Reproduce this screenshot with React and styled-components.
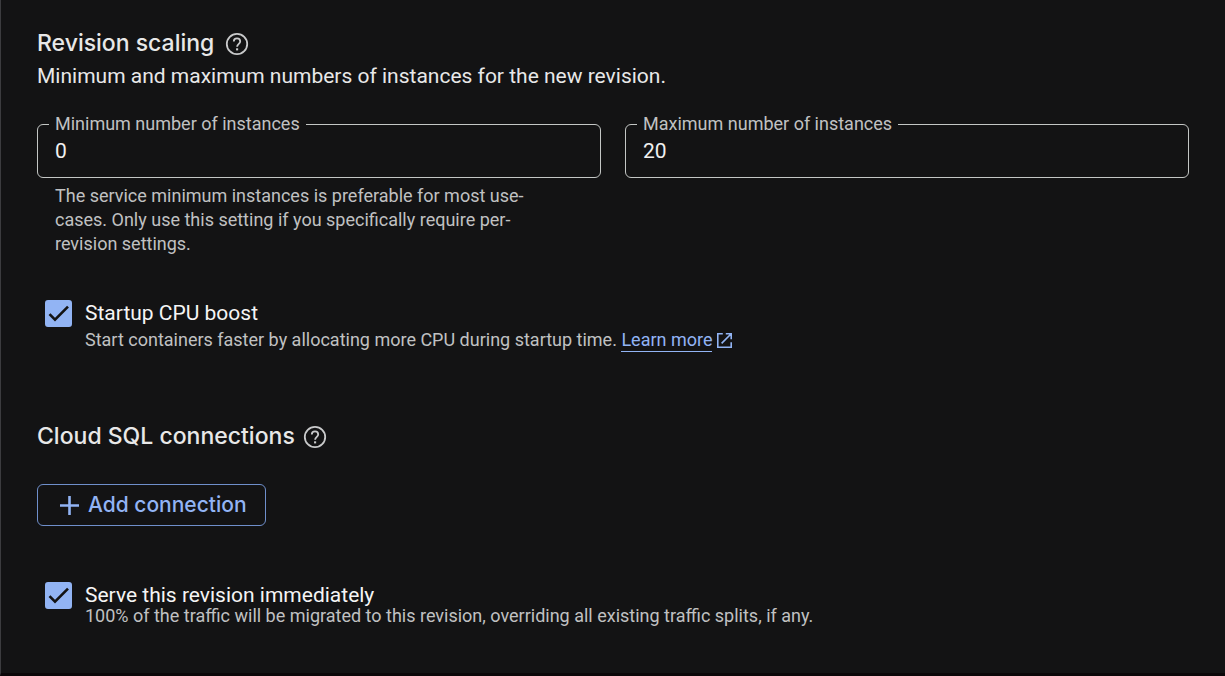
import React from "react";
import styled, { createGlobalStyle } from "styled-components";

const GlobalStyle = createGlobalStyle`
  *, *::before, *::after { box-sizing: border-box; }
  body {
    margin: 0;
    background: #131314;
    color: #e8e8e8;
    font-family: Roboto, "Liberation Sans", sans-serif;
    font-size: 18px;
    line-height: 24px;
  }
`;

const Page = styled.main`
  min-height: 100vh;
  padding: 27px 36px 36px;
  border-left: 1px solid #3c3c3f;
  border-bottom: 3px solid #0b0709;
`;

const Section = styled.section`
  margin-top: ${(p) => p.$gap || 0}px;
`;

const HeadingRow = styled.div`
  display: flex;
  align-items: center;
  gap: ${(p) => p.$gap}px;
`;

const Heading = styled.h2`
  margin: 0;
  font-family: Inter, Roboto, sans-serif;
  font-size: 23px;
  font-weight: 500;
  line-height: 32px;
`;

const HelpButton = styled.button`
  display: flex;
  padding: 2px 0 0;
  border: 0;
  background: none;
  color: #c9cacb;
  cursor: pointer;
`;

const Intro = styled.p`
  margin: 5px 0 0;
  font-size: 21px;
`;

const Fields = styled.div`
  display: grid;
  grid-template-columns: 1fr 1fr;
  align-items: start;
  gap: 24px;
  margin-top: 24px;
`;

const Outline = styled.fieldset`
  min-width: 0;
  margin: 0;
  padding: 0;
  border: 1px solid #c4c7c5;
  border-radius: 6px;
`;

const Legend = styled.legend`
  margin-left: 11px;
  padding: 0 6px;
  color: #c0c1c2;
`;

const TextInput = styled.input`
  display: block;
  width: 100%;
  height: 41px;
  padding: 0 17px 12px;
  border: 0;
  outline: 0;
  background: transparent;
  color: #f0f0f0;
  font-family: inherit;
  font-size: 21px;
`;

const Hint = styled.p`
  max-width: 500px;
  margin: 6px 0 0;
  padding: 0 0 0 18px;
  color: #c0c1c2;
`;

const Option = styled.div`
  display: flex;
  align-items: flex-start;
  gap: 13px;
  padding-left: 8px;
`;

const Box = styled.span`
  display: grid;
  flex: none;
  width: 27px;
  height: 27px;

  & > * { grid-area: 1 / 1; }
  svg { pointer-events: none; }
`;

const Checkbox = styled.input`
  appearance: none;
  width: 27px;
  height: 27px;
  margin: 0;
  border: 2px solid #92b4f4;
  border-radius: 3px;

  &:checked { background: #92b4f4; }
  &:not(:checked) + svg { visibility: hidden; }
`;

const OptionLabel = styled.label`
  display: block;
  color: #f5f5f5;
  font-size: 21px;
  line-height: 26px;
`;

const OptionNote = styled.p`
  margin: ${(p) => (p.$tight ? 0 : 2)}px 0 0;
  color: #c0c1c2;
  line-height: ${(p) => (p.$tight ? 16 : 24)}px;
`;

const ExternalLink = styled.a`
  display: inline-flex;
  align-items: center;
  gap: 4px;
  color: #92b4f4;
  line-height: 23px;
  text-decoration: none;

  span { border-bottom: 1px solid currentColor; }
`;

const OutlinedButton = styled.button`
  display: inline-flex;
  align-items: center;
  gap: 9px;
  height: 42px;
  margin-top: 32px;
  padding: 0 18px 0 22px;
  border: 1px solid #6f8fcb;
  border-radius: 6px;
  background: transparent;
  color: #92b4f4;
  font-family: Inter, Roboto, sans-serif;
  font-size: 21px;
  font-weight: 500;
  line-height: 24px;
  cursor: pointer;
`;

function HelpIcon() {
  return (
    <svg width="24" height="24" viewBox="0 0 24 24" fill="none" stroke="currentColor" strokeWidth="1.8" aria-hidden="true">
      <circle cx="12" cy="12" r="10.2" />
      <path d="M8.8 9.6a3.2 3.2 0 0 1 6.4 0c0 2.2-3.1 2.4-3.1 5.2" />
      <path d="M12.1 16.3v2.1" strokeWidth="2.1" />
    </svg>
  );
}

function CheckIcon() {
  return (
    <svg width="27" height="27" viewBox="0 0 27 27" fill="none" stroke="#131314" strokeWidth="2.6" aria-hidden="true">
      <path d="M4.5 14.2 10 19.7 23 6.7" />
    </svg>
  );
}

function OpenIcon() {
  return (
    <svg width="17" height="17" viewBox="0 0 17 17" fill="none" stroke="currentColor" strokeWidth="1.6" aria-hidden="true">
      <path d="M6.8 1.8H1.8v13.4h13.4v-5M9.8 1.8h5.4v5.4M15.2 1.8 5.6 11.4" />
    </svg>
  );
}

function PlusIcon() {
  return (
    <svg width="19" height="19" viewBox="0 0 19 19" fill="none" stroke="currentColor" strokeWidth="2.6" aria-hidden="true">
      <path d="M9.5 0v19M0 9.5h19" />
    </svg>
  );
}

function NumberField({ id, label, value, hint }) {
  return (
    <div>
      <Outline>
        <Legend>
          <label htmlFor={id}>{label}</label>
        </Legend>
        <TextInput id={id} inputMode="numeric" defaultValue={value} />
      </Outline>
      {hint && <Hint>{hint}</Hint>}
    </div>
  );
}

function CheckOption({ id, label, tight, children }) {
  return (
    <Option>
      <Box>
        <Checkbox id={id} type="checkbox" defaultChecked />
        <CheckIcon />
      </Box>
      <div>
        <OptionLabel htmlFor={id}>{label}</OptionLabel>
        <OptionNote $tight={tight}>{children}</OptionNote>
      </div>
    </Option>
  );
}

export default function App() {
  return (
    <>
      <GlobalStyle />
      <Page>
        <Section>
          <HeadingRow $gap={11}>
            <Heading>Revision scaling</Heading>
            <HelpButton type="button" aria-label="Help: revision scaling"><HelpIcon /></HelpButton>
          </HeadingRow>
          <Intro>Minimum and maximum numbers of instances for the new revision.</Intro>
          <Fields>
            <NumberField
              id="min-instances"
              label="Minimum number of instances"
              value="0"
              hint="The service minimum instances is preferable for most use-cases. Only use this setting if you specifically require per-revision settings."
            />
            <NumberField id="max-instances" label="Maximum number of instances" value="20" />
          </Fields>
        </Section>
        <Section $gap={44}>
          <CheckOption id="cpu-boost" label="Startup CPU boost">
            Start containers faster by allocating more CPU during startup time.{" "}
            <ExternalLink href="#learn-more"><span>Learn more</span><OpenIcon /></ExternalLink>
          </CheckOption>
        </Section>
        <Section $gap={68}>
          <HeadingRow $gap={8}>
            <Heading>Cloud SQL connections</Heading>
            <HelpButton type="button" aria-label="Help: Cloud SQL connections"><HelpIcon /></HelpButton>
          </HeadingRow>
          <OutlinedButton type="button"><PlusIcon />Add connection</OutlinedButton>
        </Section>
        <Section $gap={56}>
          <CheckOption id="serve-now" label="Serve this revision immediately" tight>
            100% of the traffic will be migrated to this revision, overriding all existing traffic splits, if any.
          </CheckOption>
        </Section>
      </Page>
    </>
  );
}
